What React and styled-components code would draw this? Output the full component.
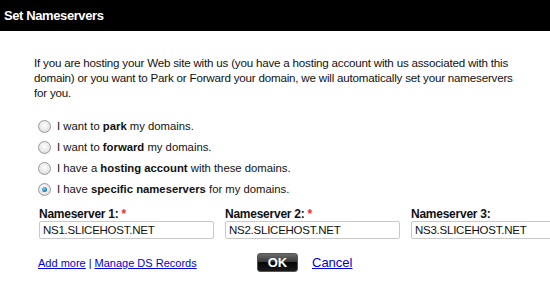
import React from "react";
import styled, { createGlobalStyle } from "styled-components";

const Global = createGlobalStyle`
  html, body { margin: 0; padding: 0; background: #fff; }
  body { font-family: "Liberation Sans", Arial, sans-serif; font-size: 12px; color: #111; }
`;

const Dialog = styled.div`
  width: 550px;
  height: 283px;
  overflow: hidden;
  background: #fff;
`;

const Header = styled.div`
  height: 31px;
  background: #000;
  color: #fff;
  font-weight: bold;
  font-size: 13px;
  letter-spacing: -0.4px;
  display: flex;
  align-items: center;
  padding-left: 4px;
  padding-bottom: 1px;
  box-sizing: border-box;
`;

const Body = styled.div`
  padding: 24px 0 0 34px;
`;

const Intro = styled.p`
  margin: 0;
  white-space: nowrap;
  line-height: 15px;
  font-size: 11.6px;
  letter-spacing: -0.2px;
`;

const Options = styled.div`
  margin-top: 19px;
  padding-left: 4px;
  display: flex;
  flex-direction: column;
  gap: 7px;
`;

const OptionRow = styled.label`
  display: flex;
  align-items: center;
  gap: 6px;
  height: 14px;
  font-size: 11.3px;
`;

const Radio = styled.span`
  width: 11px;
  height: 11px;
  border-radius: 50%;
  border: 1px solid #9a9a9a;
  background: radial-gradient(circle at 50% 40%, #fdfdfd 0%, #e9e9e9 55%, #cfcfcf 100%);
  display: flex;
  align-items: center;
  justify-content: center;
  flex: none;
  &::after {
    content: "";
    width: 5px;
    height: 5px;
    border-radius: 50%;
    background: ${(p) => (p.checked ? "radial-gradient(circle at 40% 35%, #7fd0ff, #1a6fb0 70%, #0b3f6e)" : "transparent")};
  }
`;

const Fields = styled.div`
  margin-top: 11px;
  padding-left: 5px;
  display: flex;
  gap: 11px;
`;

const Field = styled.div`
  display: flex;
  flex-direction: column;
  flex: none;
`;

const Label = styled.div`
  font-weight: bold;
  font-size: 12px;
  letter-spacing: -0.25px;
  height: 14px;
  line-height: 14px;
`;

const Req = styled.span`
  color: #e8322b;
  margin-left: 3px;
`;

const Input = styled.input`
  width: 175px;
  height: 18px;
  box-sizing: border-box;
  border: 1px solid #c9c9c9;
  border-radius: 2px;
  padding: 0 3px;
  font-family: "Liberation Sans", Arial, sans-serif;
  font-size: 11.5px;
  letter-spacing: -0.25px;
  color: #111;
  background: #fff;
  outline: none;
`;

const Actions = styled.div`
  margin-top: 14px;
  padding-left: 4px;
  display: flex;
  align-items: center;
`;

const Links = styled.div`
  width: 219px;
  display: flex;
  align-items: center;
  gap: 3px;
  font-size: 11px;
`;

const Link = styled.a`
  color: #0000dd;
  text-decoration: underline;
  cursor: pointer;
`;

const OkButton = styled.button`
  width: 41px;
  height: 19px;
  border: 1px solid #555;
  border-radius: 3px;
  background: linear-gradient(to bottom, #6a6a6a 0%, #3a3a3a 45%, #050505 50%, #1a1a1a 100%);
  color: #fff;
  font-family: "Liberation Sans", Arial, sans-serif;
  font-weight: bold;
  font-size: 13px;
  padding: 0;
  display: flex;
  align-items: center;
  justify-content: center;
  box-sizing: border-box;
`;

const CancelLink = styled(Link)`
  margin-left: 14px;
  font-size: 13px;
`;

const options = [
  { pre: "I want to ", bold: "park", post: " my domains." },
  { pre: "I want to ", bold: "forward", post: " my domains." },
  { pre: "I have a ", bold: "hosting account", post: " with these domains." },
  { pre: "I have ", bold: "specific nameservers", post: " for my domains.", checked: true },
];

const servers = [
  { label: "Nameserver 1:", value: "NS1.SLICEHOST.NET", req: true },
  { label: "Nameserver 2:", value: "NS2.SLICEHOST.NET", req: true },
  { label: "Nameserver 3:", value: "NS3.SLICEHOST.NET" },
];

export default function App() {
  return (
    <Dialog>
      <Global />
      <Header>Set Nameservers</Header>
      <Body>
        <Intro>
          If you are hosting your Web site with us (you have a hosting account with us associated with this
          <br />
          domain) or you want to Park or Forward your domain, we will automatically set your nameservers
          <br />
          for you.
        </Intro>
        <Options>
          {options.map((o, i) => (
            <OptionRow key={i}>
              <Radio checked={o.checked} />
              <span>
                {o.pre}
                <b>{o.bold}</b>
                {o.post}
              </span>
            </OptionRow>
          ))}
        </Options>
        <Fields>
          {servers.map((s) => (
            <Field key={s.label}>
              <Label>
                {s.label}
                {s.req && <Req>*</Req>}
              </Label>
              <Input defaultValue={s.value} />
            </Field>
          ))}
        </Fields>
        <Actions>
          <Links>
            <Link>Add more</Link>
            <span>|</span>
            <Link>Manage DS Records</Link>
          </Links>
          <OkButton>OK</OkButton>
          <CancelLink>Cancel</CancelLink>
        </Actions>
      </Body>
    </Dialog>
  );
}
